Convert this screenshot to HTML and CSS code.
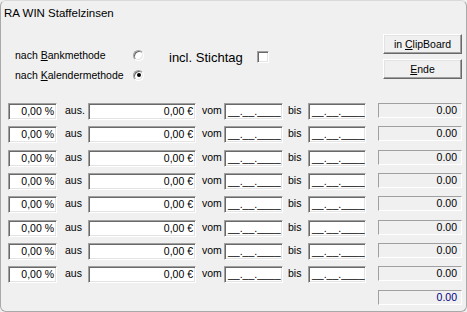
FILE: index.html
```html
<!DOCTYPE html>
<html>
<head>
<meta charset="utf-8">
<link rel="stylesheet" href="styles.css">
</head>
<body>
<div class="window">
  <div class="title">RA WIN Staffelzinsen</div>
  <div class="top">
    <div class="options">
      <div class="opt"><span class="optlabel">nach <u>B</u>ankmethode</span><span class="radio"></span></div>
      <div class="opt"><span class="optlabel">nach <u>K</u>alendermethode</span><span class="radio checked"></span></div>
    </div>
    <div class="stichtag"><span class="stlabel">incl. Stichtag</span><span class="check"></span></div>
    <div class="buttons">
      <div class="btn">in <u>C</u>lipBoard</div>
      <div class="btn"><u>E</u>nde</div>
    </div>
  </div>
  <div class="rows">
    <div class="row"><div class="edit pct">0,00 %</div><div class="lbl l-aus">aus.</div><div class="edit amt">0,00 €</div><div class="lbl l-vom">vom</div><div class="edit date">__.__.____</div><div class="lbl l-bis">bis</div><div class="edit date d2">__.__.____</div><div class="result">0.00</div></div>
    <div class="row"><div class="edit pct">0,00 %</div><div class="lbl l-aus">aus</div><div class="edit amt">0,00 €</div><div class="lbl l-vom">vom</div><div class="edit date">__.__.____</div><div class="lbl l-bis">bis</div><div class="edit date d2">__.__.____</div><div class="result">0.00</div></div>
    <div class="row"><div class="edit pct">0,00 %</div><div class="lbl l-aus">aus</div><div class="edit amt">0,00 €</div><div class="lbl l-vom">vom</div><div class="edit date">__.__.____</div><div class="lbl l-bis">bis</div><div class="edit date d2">__.__.____</div><div class="result">0.00</div></div>
    <div class="row"><div class="edit pct">0,00 %</div><div class="lbl l-aus">aus</div><div class="edit amt">0,00 €</div><div class="lbl l-vom">vom</div><div class="edit date">__.__.____</div><div class="lbl l-bis">bis</div><div class="edit date d2">__.__.____</div><div class="result">0.00</div></div>
    <div class="row"><div class="edit pct">0,00 %</div><div class="lbl l-aus">aus</div><div class="edit amt">0,00 €</div><div class="lbl l-vom">vom</div><div class="edit date">__.__.____</div><div class="lbl l-bis">bis</div><div class="edit date d2">__.__.____</div><div class="result">0.00</div></div>
    <div class="row"><div class="edit pct">0,00 %</div><div class="lbl l-aus">aus</div><div class="edit amt">0,00 €</div><div class="lbl l-vom">vom</div><div class="edit date">__.__.____</div><div class="lbl l-bis">bis</div><div class="edit date d2">__.__.____</div><div class="result">0.00</div></div>
    <div class="row"><div class="edit pct">0,00 %</div><div class="lbl l-aus">aus</div><div class="edit amt">0,00 €</div><div class="lbl l-vom">vom</div><div class="edit date">__.__.____</div><div class="lbl l-bis">bis</div><div class="edit date d2">__.__.____</div><div class="result">0.00</div></div>
    <div class="row"><div class="edit pct">0,00 %</div><div class="lbl l-aus">aus</div><div class="edit amt">0,00 €</div><div class="lbl l-vom">vom</div><div class="edit date">__.__.____</div><div class="lbl l-bis">bis</div><div class="edit date d2">__.__.____</div><div class="result">0.00</div></div>
    <div class="row total"><div class="result sum">0.00</div></div>
  </div>
</div>
</body>
</html>
```

FILE: styles.css
```css
html, body {
  margin: 0;
  padding: 0;
  background: #f0f0f0;
}
body {
  font-family: "Liberation Sans", Arial, sans-serif;
  font-size: 10.5px;
  color: #000;
}
.window {
  box-sizing: border-box;
  width: 467px;
  height: 312px;
  border: 1px solid #a9a9a9;
  border-top-color: #dadada;
  border-radius: 6px;
  background: #f0f0f0;
  overflow: hidden;
}
.title {
  height: 25px;
  line-height: 25px;
  padding-left: 3px;
  font-size: 11.5px;
}
.top {
  display: flex;
  height: 77px;
}
.options {
  padding-left: 14px;
  margin-top: 19px;
}
.opt {
  display: flex;
  align-items: center;
  height: 20px;
}
.optlabel {
  width: 118px;
}
.radio {
  box-sizing: border-box;
  width: 11px;
  height: 11px;
  border-radius: 50%;
  border: 1px solid;
  border-color: #a0a0a0 #ffffff #ffffff #a0a0a0;
  box-shadow: inset 1px 1px 0 #696969, inset -1px -1px 0 #e3e3e3;
  background: #fff;
  display: flex;
  align-items: center;
  justify-content: center;
}
.radio.checked::after {
  content: "";
  width: 4px;
  height: 4px;
  border-radius: 50%;
  background: #000;
}
.stichtag {
  display: flex;
  align-items: center;
  margin-left: 25px;
  margin-top: 25px;
  height: 12px;
}
.stlabel {
  font-size: 13px;
  width: 88px;
}
.check {
  box-sizing: border-box;
  width: 12px;
  height: 12px;
  border: 1px solid;
  border-color: #a0a0a0 #ffffff #ffffff #a0a0a0;
  box-shadow: inset 1px 1px 0 #696969, inset -1px -1px 0 #e3e3e3;
  background: #fff;
}
.buttons {
  margin-left: auto;
  margin-right: 4px;
  margin-top: 8px;
  display: flex;
  flex-direction: column;
  gap: 5px;
}
.btn {
  box-sizing: border-box;
  width: 79px;
  height: 20px;
  line-height: 18px;
  text-align: center;
  border: 1px solid;
  border-color: #ffffff #696969 #696969 #ffffff;
  box-shadow: inset -1px -1px 0 #a0a0a0, inset 1px 1px 0 #e3e3e3;
  background: #f0f0f0;
}
.rows {
  display: grid;
  grid-auto-rows: 17px;
  row-gap: 6.33px;
  padding-left: 7px;
}
.row {
  display: flex;
  align-items: flex-start;
}
.edit {
  box-sizing: border-box;
  height: 17px;
  line-height: 15px;
  border: 1px solid;
  border-color: #a0a0a0 #ffffff #ffffff #a0a0a0;
  box-shadow: inset 1px 1px 0 #696969, inset -1px -1px 0 #e3e3e3;
  background: #fff;
  white-space: nowrap;
  overflow: hidden;
}
.pct {
  width: 49px;
  text-align: right;
  padding-right: 2px;
}
.amt {
  width: 108px;
  text-align: right;
  padding-right: 2px;
}
.date {
  width: 59px;
  padding-left: 3px;
}
.date.d2 {
  width: 58px;
}
.lbl {
  box-sizing: border-box;
  line-height: 15px;
}
.l-aus {
  width: 31px;
  padding-left: 8px;
}
.l-vom {
  width: 28px;
  padding-left: 6px;
}
.l-bis {
  width: 25px;
  padding-left: 5px;
}
.result {
  box-sizing: border-box;
  width: 84px;
  height: 15px;
  line-height: 13px;
  margin-left: 12px;
  border: 1px solid;
  border-color: #a0a0a0 #ffffff #ffffff #a0a0a0;
  text-align: right;
  padding-right: 4px;
  background: #f0f0f0;
}
.row.total {
  justify-content: flex-end;
  padding-right: 4px;
}
.result.sum {
  color: #000080;
}
```
